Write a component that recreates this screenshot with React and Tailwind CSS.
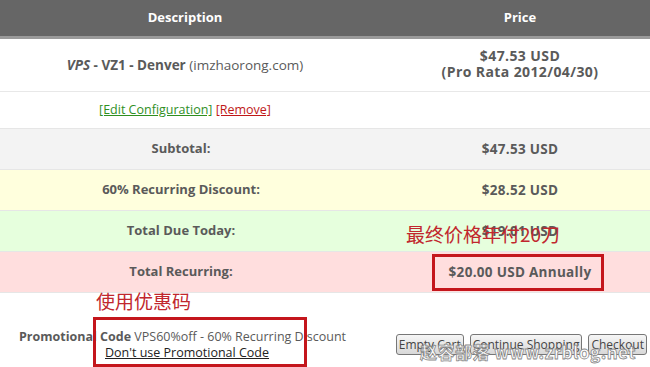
import React from "react";

const FONT = { fontFamily: '"Open Sans", "Liberation Sans", sans-serif' };
const CJK = { fontFamily: '"Noto Sans CJK SC", sans-serif' };

// one of the coloured totals rows
function TotalRow({ label, value, bg }) {
  return (
    <div className={`flex items-center h-[41px] ${bg} border-b border-[#e6e6e6]`}>
      <div className="w-[362px] text-center font-bold text-[13px]">{label}</div>
      <div className="flex-1 pl-[28px] text-center font-bold text-[13.5px] tracking-[0.3px]">{value}</div>
    </div>
  );
}

export default function App() {
  return (
    <div className="relative w-[650px] h-[367px] overflow-hidden bg-white text-[12px] text-[#5a5a5a]" style={FONT}>
      {/* table header */}
      <div className="flex items-center h-[39px] bg-[#666] border-b-[3px] border-[#9a9a9a] text-white font-bold text-[13px]">
        <div className="w-[370px] text-center">Description</div>
        <div className="flex-1 pl-[20px] text-center">Price</div>
      </div>

      {/* product */}
      <div className="flex items-center h-[53px] border-b border-[#e8e8e8]">
        <div className="w-[370px] text-center text-[13.5px]">
          <span className="font-bold italic">VPS</span>
          <span className="font-bold"> - VZ1 - Denver</span> (imzhaorong.com)
        </div>
        <div className="flex-1 pl-[20px] text-center font-bold text-[14px] tracking-[0.4px] leading-[16px] -mt-[2px]">
          <div>$47.53 USD</div>
          <div className="whitespace-nowrap">(Pro Rata 2012/04/30)</div>
        </div>
      </div>

      {/* actions */}
      <div className="flex items-center h-[37px] border-b border-[#e6e6e6]">
        <div className="w-[370px] text-center text-[12.5px]">
          <a className="text-[#2f8f1f] underline">[Edit Configuration]</a>{" "}
          <a className="text-[#c01818] underline">[Remove]</a>
        </div>
      </div>

      <TotalRow label="Subtotal:" value="$47.53 USD" bg="bg-[#f3f3f3]" />
      <TotalRow label="60% Recurring Discount:" value="$28.52 USD" bg="bg-[#ffffdd]" />
      <TotalRow label="Total Due Today:" value="$19.01 USD" bg="bg-[#e6ffdd]" />
      <TotalRow label="Total Recurring:" value="$20.00 USD Annually" bg="bg-[#ffdede]" />

      {/* promo + buttons */}
      <div className="flex items-start justify-between pt-[36px] pl-[19px] pr-[3px]">
        <div className="leading-[16px] text-[12.5px]">
          <div>
            <span className="font-bold">Promotional Code</span> VPS60%off - 60% Recurring Discount
          </div>
          <div className="pl-[86px]">
            <a className="text-[#222] underline">Don't use Promotional Code</a>
          </div>
        </div>
        <div className="flex gap-[6px] mt-[5px]">
          {["Empty Cart", "Continue Shopping", "Checkout"].map(b => (
            <button
              key={b}
              className="h-[21px] px-[2px] text-[12px] leading-[18px] text-[#444] border border-[#777] rounded-[3px] bg-gradient-to-b from-[#f6f6f6] to-[#d8d8d8]"
            >
              {b}
            </button>
          ))}
        </div>
      </div>

      {/* red annotations */}
      <div className="absolute left-[406px] top-[222px] text-[19px] leading-[24px] text-[#c1272d] whitespace-nowrap" style={CJK}>
        最终价格年付20刀
      </div>
      <div className="absolute left-[432px] top-[254px] w-[172px] h-[37px] border-[3px] border-[#c4161c]" />
      <div className="absolute left-[96px] top-[289px] text-[19px] leading-[24px] text-[#c1272d]" style={CJK}>
        使用优惠码
      </div>
      <div className="absolute left-[93px] top-[317px] w-[214px] h-[50px] border-[3px] border-[#c4161c]" />

      {/* watermark */}
      <div
        className="absolute left-[420px] top-[342px] text-[17px] font-bold leading-[20px] text-white whitespace-nowrap tracking-[0.5px]"
        style={{ ...CJK, WebkitTextStroke: "0.8px #888" }}
      >
        赵容部落 www.zrblog.net
      </div>
    </div>
  );
}
